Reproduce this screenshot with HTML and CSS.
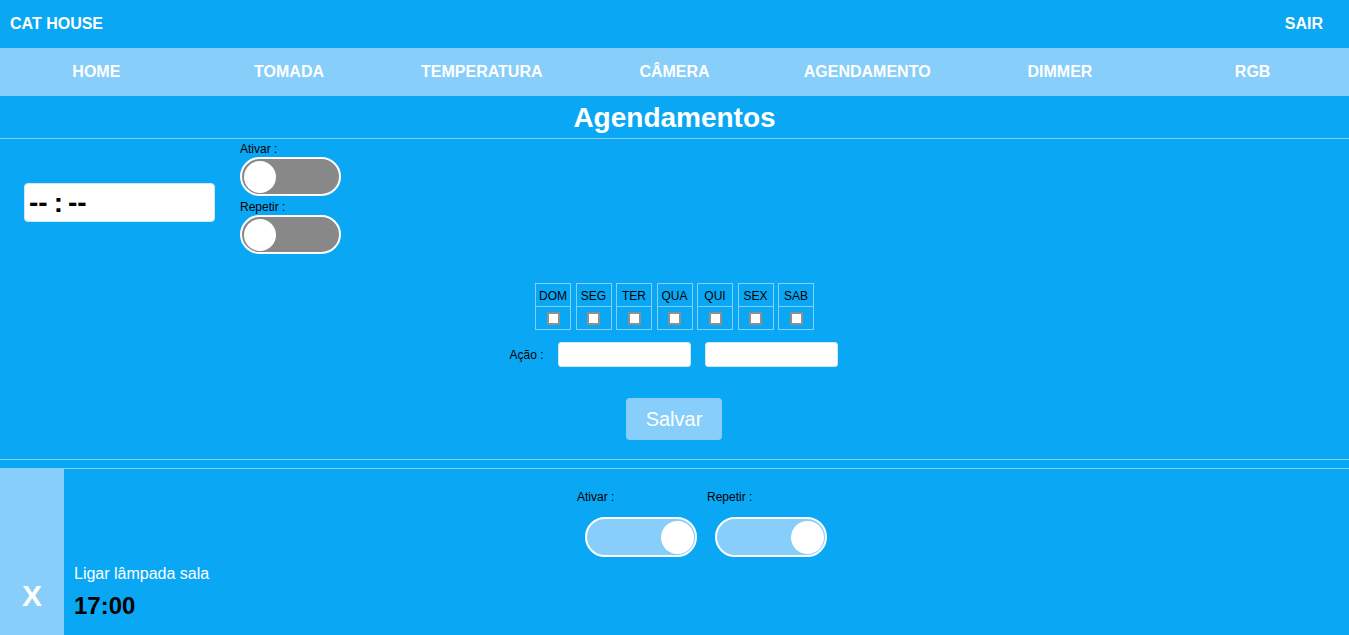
FILE: index.html
```html
<!DOCTYPE html>
<html lang="pt-BR">
<head>
<meta charset="utf-8">
<title>Cat House - Agendamentos</title>
<link rel="stylesheet" href="styles.css">
</head>
<body>
<header class="topbar">
  <span class="brand">CAT HOUSE</span>
  <span class="logout">SAIR</span>
</header>
<nav class="menu">
  <a class="menu-item">HOME</a>
  <a class="menu-item">TOMADA</a>
  <a class="menu-item">TEMPERATURA</a>
  <a class="menu-item">CÂMERA</a>
  <a class="menu-item">AGENDAMENTO</a>
  <a class="menu-item">DIMMER</a>
  <a class="menu-item">RGB</a>
</nav>
<h1 class="page-title">Agendamentos</h1>
<div class="rule"></div>
<section class="form">
  <div class="form-top">
    <div class="time-input"><span>--</span><span class="sep">:</span><span>--</span></div>
    <div class="switches">
      <div class="sw-label">Ativar :</div>
      <div class="toggle"><span class="knob"></span></div>
      <div class="sw-label sw-label-2">Repetir :</div>
      <div class="toggle"><span class="knob"></span></div>
    </div>
  </div>
  <div class="days">
    <div class="day"><div class="day-name">DOM</div><div class="day-check"><span class="check"></span></div></div>
    <div class="day"><div class="day-name">SEG</div><div class="day-check"><span class="check"></span></div></div>
    <div class="day"><div class="day-name">TER</div><div class="day-check"><span class="check"></span></div></div>
    <div class="day"><div class="day-name">QUA</div><div class="day-check"><span class="check"></span></div></div>
    <div class="day"><div class="day-name">QUI</div><div class="day-check"><span class="check"></span></div></div>
    <div class="day"><div class="day-name">SEX</div><div class="day-check"><span class="check"></span></div></div>
    <div class="day"><div class="day-name">SAB</div><div class="day-check"><span class="check"></span></div></div>
  </div>
  <div class="action-row">
    <span class="action-label">Ação :</span>
    <div class="text-field"></div>
    <div class="text-field"></div>
  </div>
  <div class="save-row"><button class="save">Salvar</button></div>
</section>
<div class="rule"></div>
<div class="gap"></div>
<div class="rule"></div>
<section class="card">
  <div class="card-delete">X</div>
  <div class="card-body">
    <div class="card-switches">
      <div class="card-sw">
        <div class="sw-label">Ativar :</div>
        <div class="toggle toggle-on"><span class="knob"></span></div>
      </div>
      <div class="card-sw">
        <div class="sw-label">Repetir :</div>
        <div class="toggle toggle-on"><span class="knob"></span></div>
      </div>
    </div>
    <div class="card-name">Ligar lâmpada sala</div>
    <div class="card-time">17:00</div>
  </div>
</section>
</body>
</html>
```

FILE: styles.css
```css
* { box-sizing: border-box; }
html, body {
  margin: 0;
  padding: 0;
  background: #0aa8f4;
  font-family: "Liberation Sans", Arial, sans-serif;
  overflow: hidden;
}
.topbar {
  height: 48px;
  display: flex;
  align-items: center;
  justify-content: space-between;
  padding: 0 26px 0 10px;
  color: #fff;
  font-weight: bold;
  font-size: 16px;
}
.menu {
  height: 48px;
  background: #87cefa;
  display: grid;
  grid-template-columns: repeat(7, 1fr);
  align-items: center;
}
.menu-item {
  text-align: center;
  color: #fff;
  font-weight: bold;
  font-size: 16px;
}
.page-title {
  margin: 0;
  height: 42px;
  line-height: 43px;
  text-align: center;
  color: #fff;
  font-size: 28px;
  font-weight: bold;
}
.rule {
  height: 1px;
  background: #82d0f8;
}
.gap { height: 8px; }
.form {
  padding-top: 3px;
  height: 320px;
}
.form-top {
  display: flex;
  align-items: flex-start;
  padding-left: 24px;
}
.time-input {
  margin-top: 41px;
  width: 191px;
  height: 39px;
  background: #fff;
  border: 1px solid #cfe6f3;
  border-radius: 4px;
  display: flex;
  align-items: center;
  padding-left: 4px;
  font-size: 28px;
  font-weight: bold;
  color: #000;
}
.time-input .sep { margin: 0 5px 0 6px; }
.switches {
  margin-left: 25px;
  display: flex;
  flex-direction: column;
}
.sw-label {
  font-size: 12px;
  line-height: 14px;
  color: #000;
}
.sw-label-2 { margin-top: 4px; }
.toggle {
  margin-top: 1px;
  width: 101px;
  height: 39px;
  border: 2px solid #fff;
  border-radius: 20px;
  background: #888888;
  display: flex;
  align-items: center;
  padding: 0 2px;
}
.knob {
  width: 32px;
  height: 32px;
  border-radius: 50%;
  background: #fff;
}
.toggle-on {
  width: 112px;
  height: 40px;
  background: #87cefa;
  justify-content: flex-end;
  margin-top: 13px;
  margin-left: 8px;
  padding: 0 1px;
}
.toggle-on .knob { width: 33px; height: 33px; }
.days {
  margin-top: 29px;
  display: flex;
  justify-content: center;
  gap: 4.5px;
}
.day {
  width: 36px;
  border: 1px solid #82d0f8;
}
.day-name {
  height: 23px;
  line-height: 24px;
  text-align: center;
  font-size: 12px;
  color: #000;
  border-bottom: 1px solid #82d0f8;
}
.day-check {
  height: 22px;
  display: flex;
  align-items: center;
  justify-content: center;
  padding-top: 1px;
}
.check {
  width: 13px;
  height: 13px;
  background: #fff;
  border: 2px solid #8f8f8f;
  border-radius: 1px;
}
.action-row {
  margin-top: 12px;
  display: flex;
  justify-content: center;
  align-items: center;
  gap: 14px;
  padding-right: 2px;
}
.action-label {
  font-size: 12px;
  color: #000;
}
.text-field {
  width: 133px;
  height: 25px;
  background: #fff;
  border: 1px solid #cfe6f3;
  border-radius: 3px;
}
.save-row {
  margin-top: 31px;
  display: flex;
  justify-content: center;
}
.save {
  width: 96px;
  height: 42px;
  border: none;
  border-radius: 4px;
  background: #87cefa;
  color: #fff;
  font-family: "Liberation Sans", Arial, sans-serif;
  font-size: 20px;
  margin-left: -1px;
}
.card {
  display: flex;
  height: 175px;
}
.card-delete {
  width: 64px;
  background: #87cefa;
  color: #fff;
  font-size: 30px;
  font-weight: bold;
  line-height: 36px;
  text-align: center;
  padding-top: 109px;
}
.card-body {
  flex: 1;
  padding: 21px 0 0 10px;
}
.card-switches {
  display: flex;
  justify-content: center;
  gap: 10px;
  padding-right: 19px;
}
.card-name {
  margin-top: 8px;
  font-size: 16px;
  line-height: 18px;
  color: #fff;
}
.card-time {
  margin-top: 9px;
  font-size: 24px;
  line-height: 28px;
  font-weight: bold;
  color: #000;
}
```
